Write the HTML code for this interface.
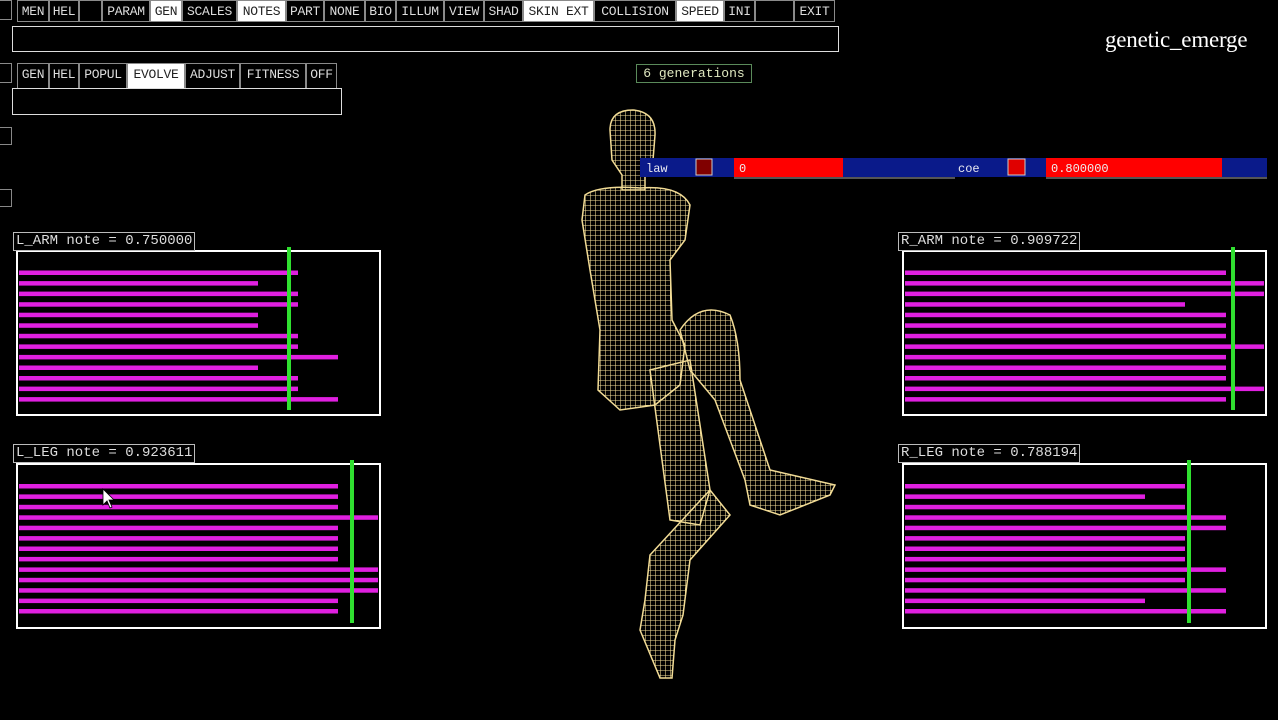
<!DOCTYPE html>
<html><head><meta charset="utf-8"><style>
body{margin:0;width:1278px;height:720px;background:#000;overflow:hidden;position:relative;font-family:"Liberation Mono",monospace;}
.b{position:absolute;top:0;height:22px;border:1px solid #8a8a8a;box-sizing:border-box;color:#ddd;font-size:13px;line-height:21px;text-align:center;background:#000;overflow:hidden;white-space:nowrap;letter-spacing:-0.3px}
.w{background:#fff;color:#222}
.r2{top:63px;height:26px;line-height:22px}
.box{position:absolute;border:1px solid #ddd;box-sizing:border-box}
.lbl{position:absolute;border:1px solid #bbb;color:#ddd;font-size:14px;line-height:17px;padding:0 2px;box-sizing:border-box;height:19px;background:#000;white-space:nowrap}
</style></head><body>
<div class="b" style="left:-2px;width:14px;height:20px"></div>
<div class="b" style="left:17px;width:32px">MEN</div>
<div class="b" style="left:49px;width:30px">HEL</div>
<div class="b" style="left:79px;width:23px"></div>
<div class="b" style="left:102px;width:48px">PARAM</div>
<div class="b w" style="left:150px;width:32px">GEN</div>
<div class="b" style="left:182px;width:55px">SCALES</div>
<div class="b w" style="left:237px;width:49px">NOTES</div>
<div class="b" style="left:286px;width:38px">PART</div>
<div class="b" style="left:324px;width:41px">NONE</div>
<div class="b" style="left:365px;width:31px">BIO</div>
<div class="b" style="left:396px;width:48px">ILLUM</div>
<div class="b" style="left:444px;width:40px">VIEW</div>
<div class="b" style="left:484px;width:39px">SHAD</div>
<div class="b w" style="left:523px;width:71px">SKIN EXT</div>
<div class="b" style="left:594px;width:82px">COLLISION</div>
<div class="b w" style="left:676px;width:48px">SPEED</div>
<div class="b" style="left:724px;width:31px">INI</div>
<div class="b" style="left:755px;width:39px"></div>
<div class="b" style="left:794px;width:41px">EXIT</div>
<div class="box" style="left:12px;top:26px;width:827px;height:26px"></div>

<div class="b r2" style="left:-2px;width:14px;height:20px"></div>
<div class="b r2" style="left:17px;width:32px">GEN</div>
<div class="b r2" style="left:49px;width:30px">HEL</div>
<div class="b r2" style="left:79px;width:48px">POPUL</div>
<div class="b r2 w" style="left:127px;width:58px">EVOLVE</div>
<div class="b r2" style="left:185px;width:55px">ADJUST</div>
<div class="b r2" style="left:240px;width:66px">FITNESS</div>
<div class="b r2" style="left:306px;width:31px">OFF</div>
<div class="box" style="left:12px;top:88px;width:330px;height:27px"></div>
<div class="box" style="left:-2px;top:127px;width:14px;height:18px;border-color:#888"></div>
<div class="box" style="left:-2px;top:189px;width:14px;height:18px;border-color:#888"></div>

<div style="position:absolute;left:1105px;top:27px;color:#fff;font-family:'Liberation Serif',serif;font-size:23px;letter-spacing:-0.2px">genetic_emerge</div>
<div style="position:absolute;left:636px;top:64px;width:116px;height:19px;border:1px solid #5a8a5a;box-sizing:border-box;color:#e0e8c0;font-size:13px;line-height:17px;text-align:center">6 generations</div>

<svg width="1278" height="720" style="position:absolute;left:0;top:0">
<defs>
<pattern id="g" width="5" height="5" patternUnits="userSpaceOnUse"><path d="M0 0H5M0 0V5" stroke="#f2dc96" stroke-width="1.1" fill="none"/></pattern>
</defs>
<g fill="url(#g)" stroke="#f2dc96" stroke-width="1.5">
<path d="M650 555 L710 490 L730 515 L690 560 L683 615 L675 640 L672 678 L660 678 L640 630 L645 600 Z"/>
<path d="M680 330 Q700 300 730 315 Q740 340 740 380 L770 470 L835 485 L830 495 L780 515 L750 505 L745 480 L715 400 L690 370 Z"/>
<path d="M650 370 L690 360 L710 490 L700 525 L670 520 L662 460 Z"/>
<path d="M585 195 Q600 185 640 188 Q680 185 690 205 L685 240 L670 260 L672 320 L685 345 L680 385 L655 405 L620 410 L598 390 L600 330 L590 270 L582 220 Z"/>
<path d="M610 130 Q610 110 633 110 Q656 112 655 135 L653 160 L645 175 L645 190 L622 190 L622 175 L612 160 Z"/>
</g>
<rect x="640" y="158" width="627" height="19" fill="#0a1a8a"/>
<text x="646" y="172" fill="#e8e8f0" font-size="12" font-family="Liberation Mono">law</text>
<rect x="696" y="159" width="16" height="16" fill="#800000" stroke="#ccc" stroke-width="1"/>
<rect x="734" y="158" width="109" height="19" fill="#ff0000"/>
<text x="739" y="172" fill="#eee" font-size="12" font-family="Liberation Mono">0</text>
<line x1="734" y1="178" x2="955" y2="178" stroke="#aaa"/>
<text x="958" y="172" fill="#e8e8f0" font-size="12" font-family="Liberation Mono">coe</text>
<rect x="1008" y="159" width="17" height="16" fill="#e00000" stroke="#ccc" stroke-width="1"/>
<rect x="1046" y="158" width="176" height="19" fill="#ff0000"/>
<text x="1051" y="172" fill="#eee" font-size="12" font-family="Liberation Mono">0.800000</text>
<line x1="1046" y1="178" x2="1267" y2="178" stroke="#aaa"/>

<g fill="none" stroke="#fff" stroke-width="2">
<rect x="17" y="251" width="363" height="164"/><rect x="17" y="464" width="363" height="164"/>
<rect x="903" y="251" width="363" height="164"/><rect x="903" y="464" width="363" height="164"/>
</g>
<g fill="#e020e0">
<rect x="19" y="270.5" width="279" height="4.5"/><rect x="19" y="281.1" width="239" height="4.5"/><rect x="19" y="291.6" width="279" height="4.5"/><rect x="19" y="302.2" width="279" height="4.5"/><rect x="19" y="312.7" width="239" height="4.5"/><rect x="19" y="323.3" width="239" height="4.5"/><rect x="19" y="333.8" width="279" height="4.5"/><rect x="19" y="344.4" width="279" height="4.5"/><rect x="19" y="354.9" width="319" height="4.5"/><rect x="19" y="365.5" width="239" height="4.5"/><rect x="19" y="376" width="279" height="4.5"/><rect x="19" y="386.6" width="279" height="4.5"/><rect x="19" y="397.1" width="319" height="4.5"/>
<rect x="19" y="484" width="319" height="4.5"/><rect x="19" y="494.4" width="319" height="4.5"/><rect x="19" y="504.8" width="319" height="4.5"/><rect x="19" y="515.3" width="359" height="4.5"/><rect x="19" y="525.7" width="319" height="4.5"/><rect x="19" y="536.1" width="319" height="4.5"/><rect x="19" y="546.5" width="319" height="4.5"/><rect x="19" y="556.9" width="319" height="4.5"/><rect x="19" y="567.4" width="359" height="4.5"/><rect x="19" y="577.8" width="359" height="4.5"/><rect x="19" y="588.2" width="359" height="4.5"/><rect x="19" y="598.6" width="319" height="4.5"/><rect x="19" y="609" width="319" height="4.5"/>
<rect x="905" y="270.5" width="321" height="4.5"/><rect x="905" y="281.1" width="359" height="4.5"/><rect x="905" y="291.6" width="359" height="4.5"/><rect x="905" y="302.2" width="280" height="4.5"/><rect x="905" y="312.7" width="321" height="4.5"/><rect x="905" y="323.3" width="321" height="4.5"/><rect x="905" y="333.8" width="321" height="4.5"/><rect x="905" y="344.4" width="359" height="4.5"/><rect x="905" y="354.9" width="321" height="4.5"/><rect x="905" y="365.5" width="321" height="4.5"/><rect x="905" y="376" width="321" height="4.5"/><rect x="905" y="386.6" width="359" height="4.5"/><rect x="905" y="397.1" width="321" height="4.5"/>
<rect x="905" y="484" width="280" height="4.5"/><rect x="905" y="494.4" width="240" height="4.5"/><rect x="905" y="504.8" width="280" height="4.5"/><rect x="905" y="515.3" width="321" height="4.5"/><rect x="905" y="525.7" width="321" height="4.5"/><rect x="905" y="536.1" width="280" height="4.5"/><rect x="905" y="546.5" width="280" height="4.5"/><rect x="905" y="556.9" width="280" height="4.5"/><rect x="905" y="567.4" width="321" height="4.5"/><rect x="905" y="577.8" width="280" height="4.5"/><rect x="905" y="588.2" width="321" height="4.5"/><rect x="905" y="598.6" width="240" height="4.5"/><rect x="905" y="609" width="321" height="4.5"/>
</g>
<g stroke="#30e030" stroke-width="4">
<line x1="289" y1="247" x2="289" y2="410"/><line x1="352" y1="460" x2="352" y2="623"/>
<line x1="1233" y1="247" x2="1233" y2="410"/><line x1="1189" y1="460" x2="1189" y2="623"/>
</g>
<path d="M103 489 L103 505 L107 501 L110 508 L112 507 L109 500 L114 500 Z" fill="#fff" stroke="#000" stroke-width="0.8"/>
</svg>
<div class="lbl" style="left:13px;top:232px">L_ARM note = 0.750000</div>
<div class="lbl" style="left:13px;top:444px">L_LEG note = 0.923611</div>
<div class="lbl" style="left:898px;top:232px">R_ARM note = 0.909722</div>
<div class="lbl" style="left:898px;top:444px">R_LEG note = 0.788194</div>
</body></html>
